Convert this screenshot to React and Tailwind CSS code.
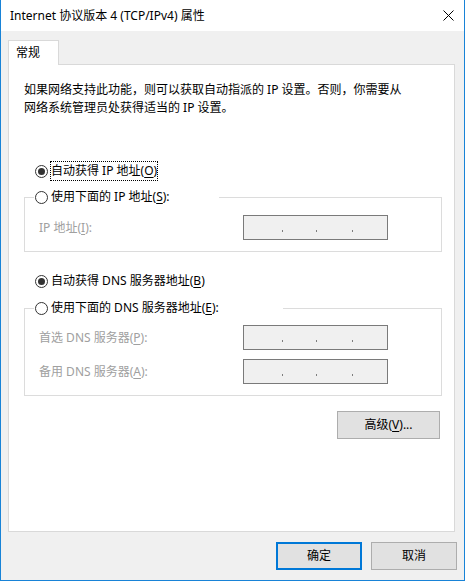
import React from 'react';

const FONT = 'font-["Noto_Sans","Noto_Sans_CJK_SC",sans-serif]';

function Mn({ children }) {
  return <span className="underline underline-offset-2">{children}</span>;
}

function Radio({ checked }) {
  return (
    <span className="w-[13px] h-[13px] rounded-full border border-[#333] bg-white flex items-center justify-center shrink-0">
      {checked && <span className="w-[7px] h-[7px] rounded-full bg-[#333]" />}
    </span>
  );
}

function RadioRow({ checked, focused, children, className = '' }) {
  return (
    <div className={`h-[20px] flex items-center ${className}`}>
      <Radio checked={checked} />
      <span
        className={`ml-[2px] leading-[18px] border ${focused ? 'border-dotted border-black' : 'border-transparent'}`}
      >
        {children}
      </span>
    </div>
  );
}

function IpBox({ className = '' }) {
  return (
    <div className={`w-[145px] h-[25px] border border-[#7a7a7a] bg-[#f0f0f0] flex items-start pt-[14px] pl-[38px] ${className}`}>
      <span className="w-px h-[2px] bg-[#7d7d7d]" />
      <span className="w-px h-[2px] bg-[#7d7d7d] ml-[33px]" />
      <span className="w-px h-[2px] bg-[#7d7d7d] ml-[35px]" />
    </div>
  );
}

function FieldRow({ label, className = '' }) {
  return (
    <div className={`flex items-center pl-[14px] ${className}`}>
      <span className="w-[204px] text-[#a0a0a0] leading-[18px]">{label}</span>
      <IpBox />
    </div>
  );
}

function Button({ children, primary, className = '' }) {
  return (
    <button
      className={`h-[28px] bg-[#e1e1e1] flex items-center justify-center text-black ${
        primary ? 'border-2 border-[#0078d7]' : 'border border-[#adadad]'
      } ${className}`}
    >
      {children}
    </button>
  );
}

export default function App() {
  return (
    <div className={`w-[465px] h-[581px] bg-[#f0f0f0] border-l border-r border-b border-[#1883d7] flex flex-col text-[12px] text-black ${FONT}`}>
      <div className="h-[31px] bg-white flex items-center justify-between pl-[9px] pr-[9px] shrink-0">
        <span className="leading-[18px]">Internet 协议版本 4 (TCP/IPv4) 属性</span>
        <svg width="11" height="11" viewBox="0 0 11 11" className="mr-px">
          <path d="M0.5 0.5 L10.5 10.5 M10.5 0.5 L0.5 10.5" stroke="#000" strokeWidth="1" fill="none" />
        </svg>
      </div>

      <div className="flex-1 pt-[9px] pl-[7px] pr-[9px] flex flex-col">
        <div className="w-[51px] h-[25px] bg-white border border-b-0 border-[#d9d9d9] -mb-px relative z-10 pl-[7px] flex items-center">
          <span className="leading-[18px]">常规</span>
        </div>
        <div className="w-[447px] h-[468px] bg-white border border-[#d9d9d9] flex flex-col pt-[16px] pl-[15px] pr-[12px]">
          <p className="leading-[18px]">
            如果网络支持此功能，则可以获取自动指派的 IP 设置。否则，你需要从
            <br />
            网络系统管理员处获得适当的 IP 设置。
          </p>

          <RadioRow checked focused className="mt-[44px] ml-[11px]">
            自动获得 IP 地址(<Mn>O</Mn>)
          </RadioRow>

          <div className="mt-[16px] border border-[#dcdcdc] pb-[11px]">
            <RadioRow className="-mt-[11px] ml-[9px] pl-px w-[185px] bg-white">
              使用下面的 IP 地址(<Mn>S</Mn>):
            </RadioRow>
            <FieldRow className="mt-[8px]" label={<>IP 地址(<Mn>I</Mn>):</>} />
          </div>

          <RadioRow checked className="mt-[19px] ml-[11px]">
            自动获得 DNS 服务器地址(<Mn>B</Mn>)
          </RadioRow>

          <div className="mt-[17px] border border-[#dcdcdc] pb-[11px]">
            <RadioRow className="-mt-[11px] ml-[9px] pl-px w-[249px] bg-white">
              使用下面的 DNS 服务器地址(<Mn>E</Mn>):
            </RadioRow>
            <FieldRow className="mt-[7px]" label={<>首选 DNS 服务器(<Mn>P</Mn>):</>} />
            <FieldRow className="mt-[9px]" label={<>备用 DNS 服务器(<Mn>A</Mn>):</>} />
          </div>

          <div className="mt-[15px] flex justify-end">
            <Button className="w-[103px] mr-[2px]">
              高级(<Mn>V</Mn>)...
            </Button>
          </div>
        </div>

        <div className="mt-[10px] flex justify-end gap-[9px] -mr-[2px]">
          <Button primary className="w-[86px]">确定</Button>
          <Button className="w-[86px]">取消</Button>
        </div>
      </div>
    </div>
  );
}
